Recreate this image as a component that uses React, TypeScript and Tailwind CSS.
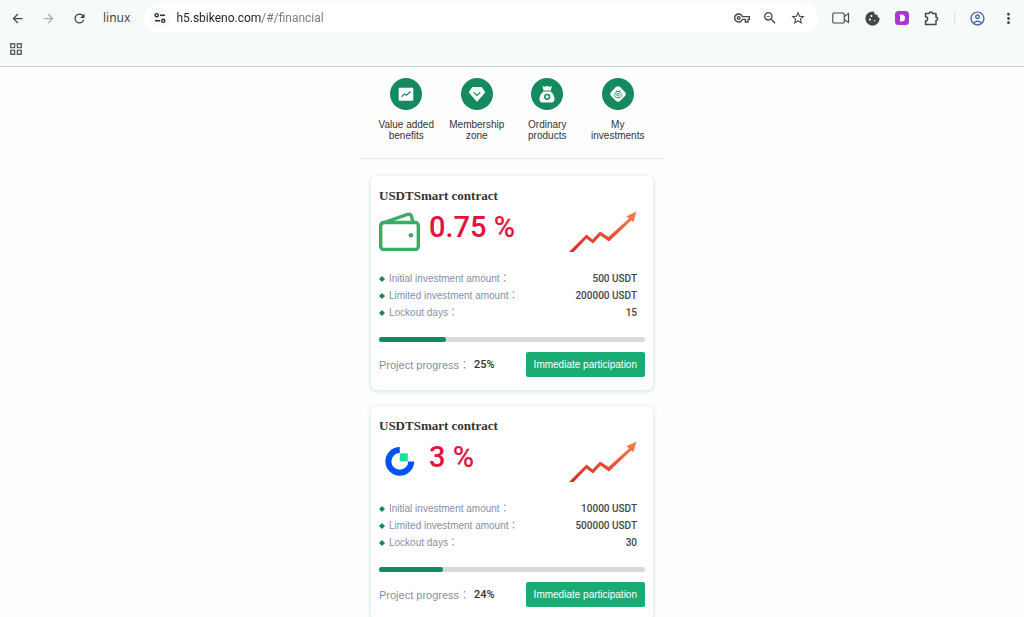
import React from "react";
import {
    MdArrowBack,
    MdArrowForward,
    MdCookie,
    MdMoreVert,
    MdOutlineAccountCircle,
    MdOutlineVpnKey,
    MdRefresh,
    MdStarBorder,
    MdZoomOut,
} from "react-icons/md";

interface Contract {
    id: number;
    rate: string;
    logo: React.ReactNode;
    initial: string;
    limited: string;
    days: string;
    progress: number;
}

const WalletIcon: React.FC = () => (
    <svg viewBox="0 0 42 40" className="w-[42px] h-10" fill="none" stroke="#3aad64" strokeWidth="3.4" strokeLinejoin="round">
        <rect x="1.7" y="11.5" width="37.6" height="27" rx="3" />
        <path d="M2.5 12.5 L28.5 3.4 Q31.5 2.6 32.4 5 L34 11" />
        <circle cx="32" cy="24.3" r="2.3" fill="#3aad64" stroke="none" />
    </svg>
);

const CoinIcon: React.FC = () => (
    <svg viewBox="0 0 42 40" className="w-[42px] h-10">
        <path d="M20.8 9 A11.4 11.4 0 1 0 32.2 20.4" fill="none" stroke="#0052f5" strokeWidth="6" />
        <rect x="20.8" y="12.4" width="8" height="8" fill="#12e3a0" />
    </svg>
);

const TrendIcon: React.FC<{ id: string }> = ({ id }) => (
    <svg viewBox="0 0 68 42" className="w-[68px] h-[42px]">
        <defs>
            <linearGradient id={id} x1="0" y1="1" x2="1" y2="0">
                <stop offset="0" stopColor="#dc2626" />
                <stop offset="0.5" stopColor="#ea4f35" />
                <stop offset="1" stopColor="#f2824c" />
            </linearGradient>
        </defs>
        <path
            d="M0 41 L17.5 23.5 L23.5 28.5 L31 20.5 L39.5 26 L60 7.5 L57.5 5.2 L67.5 0.5 L64.5 11 L62 9.5 L40 30.5 L31.5 24.5 L24 32.5 L17.5 27.5 L4.5 41 Z"
            fill={`url(#${id})`}
        />
    </svg>
);

const menu = [
    {
        label: "Value added benefits",
        icon: (
            <>
                <rect x="8.7" y="9.7" width="14.6" height="13" rx="1" fill="#fff" />
                <path d="M11.5 18.8 L14.3 16 L16.5 17.2 L20.5 13.5" fill="none" stroke="#148a5e" strokeWidth="1.2" />
            </>
        ),
    },
    {
        label: "Membership zone",
        icon: (
            <>
                <path d="M11.5 9.5 H20.5 L23.8 14.3 L16 23.3 L8.2 14.3 Z" fill="#fff" stroke="#fff" strokeLinejoin="round" />
                <path d="M12.6 14.4 L16 17.4 L19.4 14.4" fill="none" stroke="#148a5e" strokeWidth="1.2" />
            </>
        ),
    },
    {
        label: "Ordinary products",
        icon: (
            <>
                <path d="M11.5 8 L13.5 8.8 L16 8 L18.5 8.8 L20.8 8 L19.8 12.6 H12.5 Z" fill="#fff" />
                <path d="M12.4 13.6 H19.6 C21.8 15.5 23.5 18 23.5 21 Q23.5 24.4 20.5 24.4 H11.5 Q8.5 24.4 8.5 21 C8.5 18 10.2 15.5 12.4 13.6 Z" fill="#fff" />
                <circle cx="16.2" cy="18.8" r="2.4" fill="none" stroke="#148a5e" strokeWidth="1.5" />
            </>
        ),
    },
    {
        label: "My investments",
        icon: (
            <>
                <rect x="9.7" y="9.7" width="12.6" height="12.6" rx="3.2" transform="rotate(45 16 16)" fill="#fff" />
                <path d="M13.9 12.2 L14.7 13.6 C12 16 12.2 19.4 14.4 19.6 H17.8 C20 19.4 20 16 17.4 13.6 L18.2 12.2 M14.5 13.5 H17.6" fill="none" stroke="#148a5e" strokeWidth="0.9" />
                <circle cx="16" cy="16.7" r="1.3" fill="none" stroke="#148a5e" strokeWidth="0.8" />
            </>
        ),
    },
];

const contracts: Contract[] = [
    { id: 1, rate: "0.75 %", logo: <WalletIcon />, initial: "500 USDT", limited: "200000 USDT", days: "15", progress: 25 },
    { id: 2, rate: "3 %", logo: <CoinIcon />, initial: "10000 USDT", limited: "500000 USDT", days: "30", progress: 24 },
];

const DetailRow: React.FC<{ label: string; value: string }> = ({ label, value }) => (
    <div className="flex items-center justify-between h-[17px]">
        <dt className="flex items-center gap-1 text-[#8590a6]">
            <svg viewBox="0 0 6 6" className="w-1.5 h-1.5">
                <path d="M3 0 L6 3 L3 6 L0 3 Z" fill="#148a5e" />
            </svg>
            {label}：
        </dt>
        <dd className="font-[Roboto] font-medium text-[#444]">{value}</dd>
    </div>
);

const ContractCard: React.FC<{ contract: Contract }> = ({ contract }) => (
    <section className="rounded-md bg-white px-2 pt-3 pb-[13px] shadow-[0_1px_4px_1px_#d5ebe3]">
        <h2 className="font-['Liberation_Serif',serif] font-bold text-[13px] leading-4 text-[#333]">USDTSmart contract</h2>
        <div className="flex items-start mt-[7px]">
            {contract.logo}
            <span className="ml-2 font-[Roboto] font-medium text-[29px] leading-8 text-[#e0143c]">{contract.rate}</span>
            <div className="ml-auto mr-2">
                <TrendIcon id={`trend-${contract.id}`} />
            </div>
        </div>
        <dl className="mt-[17px] mr-2 text-[10px]">
            <DetailRow label="Initial investment amount" value={contract.initial} />
            <DetailRow label="Limited investment amount" value={contract.limited} />
            <DetailRow label="Lockout days" value={contract.days} />
        </dl>
        <div className="mt-4 h-[5px] rounded-full bg-[#d9d9d9]">
            <div className="h-full rounded-full bg-[#148a5e]" style={{ width: `${contract.progress}%` }} />
        </div>
        <div className="flex items-center justify-between mt-[10px]">
            <p className="flex items-center text-[11px] leading-4 text-[#8590a6]">
                Project progress：
                <span className="ml-1 font-[Roboto] font-medium text-[#333]">{contract.progress}%</span>
            </p>
            <button className="h-[25px] px-2 rounded-xs bg-[#1aac75] text-white text-[10px]">Immediate participation</button>
        </div>
    </section>
);

const BrowserBar: React.FC = () => (
    <header className="shrink-0 bg-[#f6faf9] border-b border-[#cfd1d1] text-[#474747] font-['Noto_Sans',sans-serif]">
        <div className="flex items-center h-9 pl-2.5 pr-[7px]">
            <div className="flex items-center gap-4">
                <button aria-label="Back"><MdArrowBack size={15} /></button>
                <button aria-label="Forward" className="text-[#a9adac]"><MdArrowForward size={15} /></button>
                <button aria-label="Reload"><MdRefresh size={15} /></button>
                <a href="#linux" className="text-[12px]">linux</a>
            </div>
            <div className="flex flex-1 items-center h-[30px] ml-3.5 pl-1.5 pr-3 rounded-full bg-white">
                <button aria-label="Site information" className="flex items-center justify-center w-5 h-5 rounded-full bg-[#f6faf9]">
                    <svg viewBox="0 0 12 12" className="w-3 h-3" fill="none" stroke="#333" strokeWidth="1.4">
                        <circle cx="2.7" cy="3.2" r="1.6" />
                        <path d="M6 3.2 H11 M1 8.8 H6" />
                        <circle cx="9.2" cy="8.8" r="1.6" />
                    </svg>
                </button>
                <input
                    aria-label="Address"
                    defaultValue="h5.sbikeno.com/#/financial"
                    className="flex-1 min-w-0 ml-1.5 font-[Roboto] text-[12px] text-transparent bg-clip-text bg-[linear-gradient(to_right,#202020_86px,#777_86px)] outline-none"
                />
                <div className="flex items-center gap-3">
                    <button aria-label="Passwords"><MdOutlineVpnKey size={16} /></button>
                    <button aria-label="Zoom"><MdZoomOut size={16} /></button>
                    <button aria-label="Bookmark"><MdStarBorder size={16} /></button>
                </div>
            </div>
            <div className="flex items-center gap-[14px] ml-3.5">
                <button aria-label="Record">
                    <svg viewBox="0 0 18 14" className="w-[18px] h-3.5" fill="none" stroke="#474747" strokeWidth="1.1">
                        <rect x="0.8" y="2" width="11.4" height="10" rx="1" />
                        <path d="M12.2 5.5 L16.5 2.5 V11.5 L12.2 8.5" />
                    </svg>
                </button>
                <button aria-label="Cookies"><MdCookie size={17} /></button>
                <button aria-label="Dark mode">
                    <svg viewBox="0 0 14 14" className="w-3.5 h-3.5">
                        <rect width="14" height="14" rx="3.5" fill="#ab35d6" />
                        <path d="M5 3.5 H6.5 A3.5 3.5 0 0 1 6.5 10.5 H5 Z" fill="#fff" />
                    </svg>
                </button>
                <button aria-label="Extensions">
                    <svg viewBox="0 0 17 17" className="w-[17px] h-[17px]" fill="none" stroke="#474747" strokeWidth="1.5" strokeLinejoin="round">
                        <path d="M2.5 3.5 H6.3 A1.6 1.6 0 0 1 9.5 3.5 H13 V7.2 A1.6 1.6 0 0 1 13 10.4 V14.5 H2.5 V11 A2.1 2.1 0 0 0 2.5 6.8 Z" />
                    </svg>
                </button>
                <span className="w-px h-3.5 bg-[#dde1e0]" />
                <button aria-label="Profile" className="text-[#4a6ba8]"><MdOutlineAccountCircle size={17} /></button>
                <button aria-label="Menu"><MdMoreVert size={17} /></button>
            </div>
        </div>
        <div className="flex items-center h-[30px] px-2.5 pb-1">
            <button aria-label="Apps">
                <svg viewBox="0 0 12 12" className="w-3 h-3" fill="none" stroke="#5f6368" strokeWidth="1.4">
                    <path d="M0.7 0.7 H4.6 V4.6 H0.7 Z M7.4 0.7 H11.3 V4.6 H7.4 Z M0.7 7.4 H4.6 V11.3 H0.7 Z M7.4 7.4 H11.3 V11.3 H7.4 Z" />
                </svg>
            </button>
        </div>
    </header>
);

const App: React.FC = () => {
    return (
        <div className="flex flex-col h-screen bg-[#fefefe] font-['Liberation_Sans','Noto_Sans_CJK_TC',sans-serif]">
            <BrowserBar />
            <main className="flex-1 overflow-y-auto [scrollbar-width:none]">
                <div className="w-full max-w-[306px] mx-auto">
                    <nav className="flex px-3 pt-[11px] pb-[17px] border-b border-[#e4e6e6]">
                        {menu.map((item) => (
                            <a key={item.label} href="#/financial" className="flex flex-1 flex-col items-center gap-[9px] text-center text-[10px] leading-[11px] text-[#333]">
                                <svg viewBox="0 0 32 32" className="w-8 h-8">
                                    <circle cx="16" cy="16" r="16" fill="#148a5e" />
                                    {item.icon}
                                </svg>
                                <span className="px-1">{item.label}</span>
                            </a>
                        ))}
                    </nav>
                    <div className="flex flex-col gap-4 px-3 py-[17px]">
                        {contracts.map((contract) => (
                            <ContractCard key={contract.id} contract={contract} />
                        ))}
                    </div>
                </div>
            </main>
        </div>
    );
};

export default App;
